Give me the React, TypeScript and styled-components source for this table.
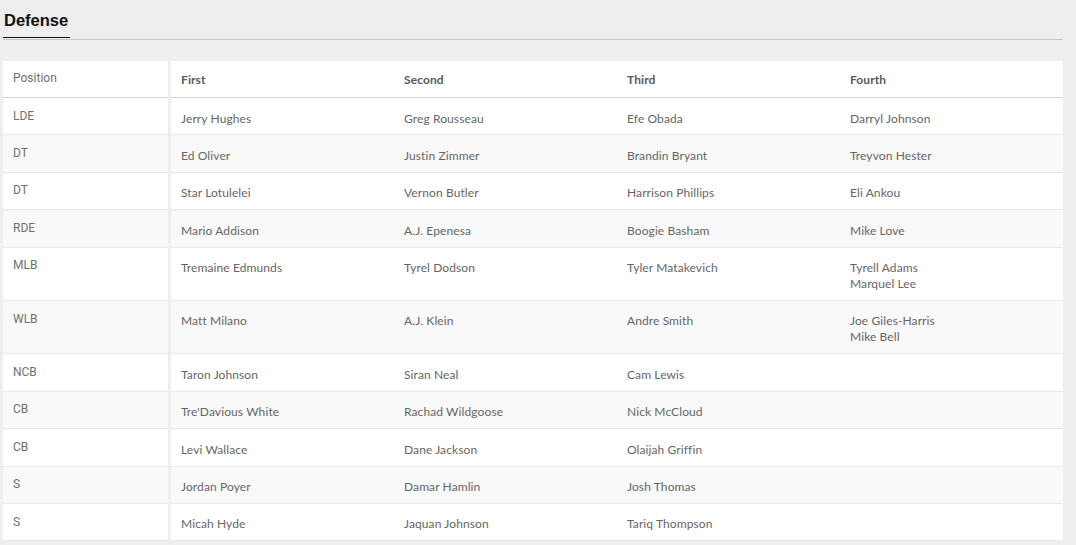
import styled, { createGlobalStyle } from "styled-components";

const GlobalStyle = createGlobalStyle`
    html, body {
        margin: 0;
        padding: 0;
        background: #eeeeee;
    }
`

const Page = styled.div`
    width: 1060px;
    padding: 0 0 0 3px;
`

const TitleBar = styled.div`
    border-bottom: 1px solid #c8c8c8;
    margin-bottom: 21px;
    height: 40px;
    box-sizing: border-box;
`

const Title = styled.h2`
    display: inline-block;
    margin: 0;
    padding: 11px 2px 0 1px;
    height: 38px;
    box-sizing: border-box;
    font-family: 'Liberation Sans', Arial, sans-serif;
    font-size: 16.5px;
    font-weight: 700;
    color: #111;
    border-bottom: 1px solid #111;
    line-height: 18px;
`

const Table = styled.div`
    display: flex;
    flex-direction: column;
`

const Row = styled.div`
    display: grid;
    grid-template-columns: 168px repeat(4, 1fr);
`

const PosCell = styled.div<{ $head?: boolean; $alt?: boolean }>`
    margin-right: 3px;
    padding: ${p => (p.$head ? "9px 10px 11px" : "9.7px 10px 10.7px")};
    background: ${p => (p.$alt ? "#f9f9f9" : "#fff")};
    border-bottom: 1px solid ${p => (p.$head ? "#d2d2d2" : "#e9e9e9")};
    font-family: Roboto, 'Liberation Sans', sans-serif;
    font-size: 12px;
    line-height: 16px;
    color: #707070;
`

const Cell = styled.div<{ $head?: boolean; $alt?: boolean }>`
    padding: ${p => (p.$head ? "11px 10px 9px" : "12.5px 10px 7.9px")};
    background: ${p => (p.$alt ? "#f9f9f9" : "#fff")};
    border-bottom: 1px solid ${p => (p.$head ? "#d2d2d2" : "#e9e9e9")};
    font-family: Lato, 'Open Sans', sans-serif;
    font-size: 12px;
    font-weight: ${p => (p.$head ? 700 : 400)};
    line-height: 16px;
    color: ${p => (p.$head ? "#5a5a5a" : "#666")};
    letter-spacing: 0.1px;
`

const Name = styled.div``

const rows: [string, string[][]][] = [
    ["LDE", [["Jerry Hughes"], ["Greg Rousseau"], ["Efe Obada"], ["Darryl Johnson"]]],
    ["DT", [["Ed Oliver"], ["Justin Zimmer"], ["Brandin Bryant"], ["Treyvon Hester"]]],
    ["DT", [["Star Lotulelei"], ["Vernon Butler"], ["Harrison Phillips"], ["Eli Ankou"]]],
    ["RDE", [["Mario Addison"], ["A.J. Epenesa"], ["Boogie Basham"], ["Mike Love"]]],
    ["MLB", [["Tremaine Edmunds"], ["Tyrel Dodson"], ["Tyler Matakevich"], ["Tyrell Adams", "Marquel Lee"]]],
    ["WLB", [["Matt Milano"], ["A.J. Klein"], ["Andre Smith"], ["Joe Giles-Harris", "Mike Bell"]]],
    ["NCB", [["Taron Johnson"], ["Siran Neal"], ["Cam Lewis"], []]],
    ["CB", [["Tre'Davious White"], ["Rachad Wildgoose"], ["Nick McCloud"], []]],
    ["CB", [["Levi Wallace"], ["Dane Jackson"], ["Olaijah Griffin"], []]],
    ["S", [["Jordan Poyer"], ["Damar Hamlin"], ["Josh Thomas"], []]],
    ["S", [["Micah Hyde"], ["Jaquan Johnson"], ["Tariq Thompson"], []]],
]

export default function App() {
    return (
        <>
            <GlobalStyle />
            <Page>
                <TitleBar>
                    <Title>Defense</Title>
                </TitleBar>
                <Table>
                    <Row>
                        <PosCell $head>Position</PosCell>
                        <Cell $head>First</Cell>
                        <Cell $head>Second</Cell>
                        <Cell $head>Third</Cell>
                        <Cell $head>Fourth</Cell>
                    </Row>
                    {rows.map(([pos, depth], i) => (
                        <Row key={i}>
                            <PosCell $alt={i % 2 === 1}>{pos}</PosCell>
                            {depth.map((names, j) => (
                                <Cell key={j} $alt={i % 2 === 1}>
                                    {names.map(n => <Name key={n}>{n}</Name>)}
                                </Cell>
                            ))}
                        </Row>
                    ))}
                </Table>
            </Page>
        </>
    )
}
